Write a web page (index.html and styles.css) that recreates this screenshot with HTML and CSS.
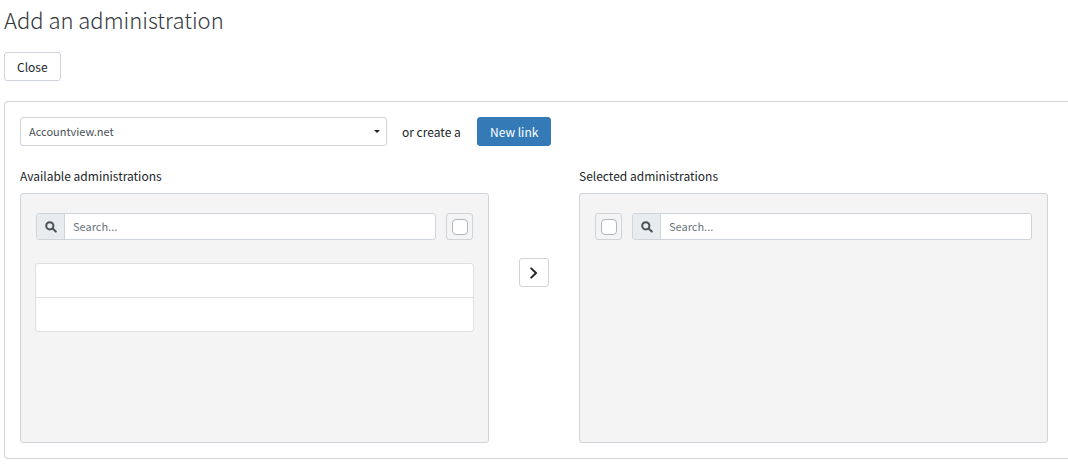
FILE: index.html
```html
<!DOCTYPE html>
<html lang="en">
<head>
<meta charset="utf-8">
<title>Add an administration</title>
<link rel="stylesheet" href="styles.css">
</head>
<body>
<main class="page">
  <h1 class="title">Add an administration</h1>
  <button type="button" class="btn btn-close">Close</button>
  <section class="card">
    <div class="link-row">
      <select class="select" aria-label="Link">
        <option>Accountview.net</option>
      </select>
      <span class="link-text">or create a</span>
      <button type="button" class="btn btn-primary">New link</button>
    </div>
    <div class="picker">
      <section class="column">
        <h2 class="label">Available administrations</h2>
        <div class="panel">
          <div class="tools">
            <div class="search">
              <label class="addon" for="search-available" aria-label="Search available">
                <svg class="glass" viewBox="0 0 12 12"><circle cx="4.8" cy="4.8" r="3.6"/><path d="M7.6 7.6 10.8 10.6"/></svg>
              </label>
              <input class="input" id="search-available" type="text" placeholder="Search...">
            </div>
            <label class="check"><input type="checkbox" aria-label="Select all available"></label>
          </div>
          <ul class="list">
            <li class="item"></li>
            <li class="item"></li>
          </ul>
        </div>
      </section>
      <div class="move">
        <button type="button" class="btn btn-move" aria-label="Move to selected">
          <svg class="chevron" viewBox="0 0 12 12"><path d="M3.2 1.4 8 6 3.2 10.6"/></svg>
        </button>
      </div>
      <section class="column">
        <h2 class="label">Selected administrations</h2>
        <div class="panel">
          <div class="tools">
            <label class="check"><input type="checkbox" aria-label="Select all selected"></label>
            <div class="search">
              <label class="addon" for="search-selected" aria-label="Search selected">
                <svg class="glass" viewBox="0 0 12 12"><circle cx="4.8" cy="4.8" r="3.6"/><path d="M7.6 7.6 10.8 10.6"/></svg>
              </label>
              <input class="input" id="search-selected" type="text" placeholder="Search...">
            </div>
          </div>
        </div>
      </section>
    </div>
  </section>
</main>
</body>
</html>
```
FILE: styles.css
```css
* {
  box-sizing: border-box;
}

body {
  margin: 0;
  background: #fff;
  color: #212529;
  font: 12px/20px "Noto Sans CJK SC", "Open Sans", sans-serif;
}

.page {
  padding: 4px 0 9px 4px;
}

.title {
  margin: 0 0 18px;
  color: #343a40;
  font-size: 22px;
  font-weight: 300;
  line-height: 30px;
}

.btn {
  display: inline-flex;
  align-items: center;
  justify-content: center;
  height: 29px;
  padding: 0 12px;
  border: 1px solid #ced4da;
  border-radius: 3px;
  background: #fff;
  color: #212529;
  font: inherit;
}

.btn-close {
  display: flex;
}

.btn-primary {
  border-color: #337ab7;
  background: #337ab7;
  color: #fff;
}

.card {
  margin-top: 20px;
  padding: 15px 20px 15px 15px;
  border: 1px solid #ced4da;
  border-right: 0;
  border-radius: 4px 0 0 4px;
}

.link-row {
  display: flex;
  align-items: center;
  gap: 15px;
}

.link-text {
  min-width: 60px;
}

.select {
  appearance: none;
  width: 367px;
  height: 29px;
  padding: 0 24px 2px 8px;
  border: 1px solid #ced4da;
  border-radius: 3px;
  background: #fff url("data:image/svg+xml,%3Csvg xmlns='http://www.w3.org/2000/svg' viewBox='0 0 6 3'%3E%3Cpath d='M0 0h6L3 3z' fill='%23212529'/%3E%3C/svg%3E") no-repeat right 6px center / 6px 3px;
  color: #495057;
  font: inherit;
  font-size: 11px;
}

.picker {
  display: grid;
  grid-template-columns: minmax(0, 1fr) 90px minmax(0, 1fr);
  margin-top: 20px;
}

.label {
  margin: 0 0 7px;
  font-size: 12px;
  font-weight: 400;
  line-height: 20px;
}

.panel {
  min-height: 250px;
  padding: 19px 15px;
  border: 1px solid #ced4da;
  border-radius: 3px;
  background: #f4f4f4;
}

.tools {
  display: flex;
  gap: 10px;
}

.search {
  display: flex;
  flex: 1;
  height: 27px;
  overflow: hidden;
  border: 1px solid #ced4da;
  border-radius: 3px;
  background: #fff;
}

.addon {
  display: flex;
  align-items: center;
  justify-content: center;
  width: 28px;
  border-right: 1px solid #ced4da;
  background: #e9ecef;
}

.glass {
  width: 12px;
  height: 12px;
  fill: none;
  stroke: #495057;
  stroke-width: 2;
  stroke-linecap: round;
}

.input {
  flex: 1;
  min-width: 0;
  padding: 0 8px 2px;
  border: 0;
  background: transparent;
  color: #495057;
  font: inherit;
  font-size: 11px;
}

.input::placeholder {
  color: #6c757d;
  opacity: 1;
}

.check {
  display: flex;
  align-items: center;
  justify-content: center;
  width: 27px;
  height: 27px;
  border: 1px solid #ced4da;
  border-radius: 3px;
}

.check input {
  appearance: none;
  width: 16px;
  height: 16px;
  margin: 0;
  border: 1px solid #adb5bd;
  border-radius: 4px;
  background: #fff;
}

.list {
  margin: 23px -1px 0;
  padding: 0;
  overflow: hidden;
  border: 1px solid #dfdfdf;
  border-radius: 3px;
  background: #fff;
  list-style: none;
}

.item {
  height: 33px;
}

.item + .item {
  height: 34px;
  border-top: 1px solid #dfdfdf;
}

.move {
  display: flex;
  align-items: flex-start;
  justify-content: center;
  padding-top: 92px;
}

.btn-move {
  width: 30px;
  padding: 0;
}

.chevron {
  width: 12px;
  height: 12px;
  fill: none;
  stroke: #212529;
  stroke-width: 2;
  stroke-linecap: round;
  stroke-linejoin: round;
}
```
